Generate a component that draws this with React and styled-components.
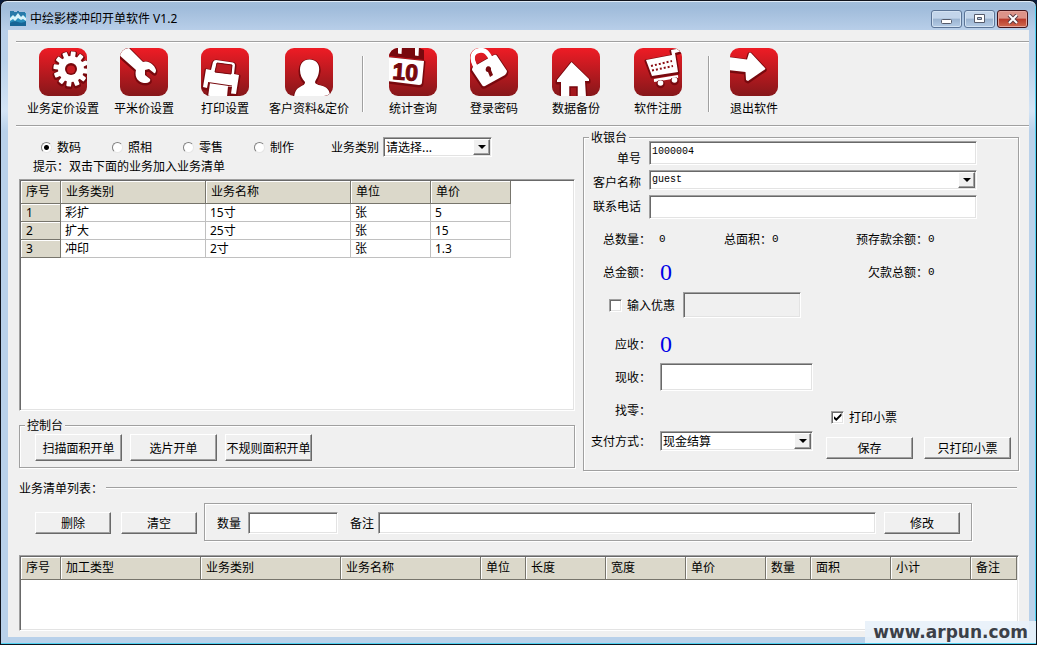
import React from "react";
import styled, { createGlobalStyle, css } from "styled-components";

const uiFont = `"Noto Sans", "Noto Sans CJK SC", sans-serif`;
const monoFont = `"Liberation Mono", "Noto Sans CJK SC", monospace`;

const Global = createGlobalStyle`
  *, *::before, *::after { box-sizing: border-box; }
  body {
    margin: 0;
    background: #0b1c3c;
    font: 12px/16px "Noto Sans CJK SC", sans-serif;
    color: #000;
  }
  button, input, select { font: inherit; color: inherit; margin: 0; }
`;

const sunken = css`
  border: 1px solid;
  border-color: #a0a0a0 #fff #fff #a0a0a0;
  box-shadow: inset 1px 1px #696969, inset -1px -1px #e3e3e3;
`;

const raised = css`
  border: 1px solid;
  border-color: #fff #696969 #696969 #fff;
  box-shadow: inset -1px -1px #a0a0a0;
`;

const Window = styled.div`
  position: relative;
  min-height: 100vh;
  display: flex;
  flex-direction: column;
  padding: 0 7px 7px 7px;
  background: linear-gradient(#a3bedb 0, #9fbbda 6px, #b9cfe9 30px, #b9d1ea 60px, #d4e4f5 110px, #b9d1ea 130px);
  border: 1px solid #10131c;
  border-radius: 7px 7px 0 0;
  box-shadow: inset 0 1px #dfeaf6, inset -1px -1px #4fd2f2;
`;

const TitleBar = styled.header`
  height: 29px;
  flex: none;
  display: flex;
  align-items: center;
  gap: 4px;
  padding: 6px 1px 0 2px;
  font-family: ${uiFont};
`;

const Title = styled.h1`
  flex: 1;
  margin: 0;
  font: inherit;
`;

const WindowControls = styled.div`
  display: flex;
  gap: 2px;
`;

const WindowButton = styled.button`
  width: 31px;
  height: 18px;
  padding: 0;
  display: grid;
  place-items: center;
  border-radius: 3px;
  border: 1px solid ${(p) => (p.$danger ? "#43141a" : "#5b7496")};
  box-shadow: inset 0 0 0 1px ${(p) => (p.$danger ? "#e5a59c" : "#d3e2f2")};
  background: ${(p) =>
    p.$danger
      ? "linear-gradient(#dc9388 0 45%, #b93a2a 50%, #cf6a50)"
      : "linear-gradient(#c3d5ea 0 45%, #9ab3d0 50%, #b4cbe5)"};
`;

const Content = styled.main`
  flex: 1;
  display: flex;
  flex-direction: column;
  padding: 11px 0 6px;
  background: #f0f0f0;
`;

const Toolbar = styled.nav`
  display: flex;
  gap: 1px;
  margin-left: 8px;
  padding: 6px 0 9px 7px;
  border: solid #a0a0a0;
  border-width: 1px 0;
  box-shadow: inset 0 1px #fff, 0 1px #fff;
`;

const ToolButton = styled.button`
  width: ${(p) => p.$w || 80}px;
  flex: none;
  padding: 0;
  border: 0;
  background: none;
  display: flex;
  flex-direction: column;
  align-items: center;
  gap: 4px;
  white-space: nowrap;
`;

const ToolSeparator = styled.span`
  width: 2px;
  margin: 8px 8px 4px 9px;
  border-left: 1px solid #a0a0a0;
  border-right: 1px solid #fff;
`;

const Columns = styled.div`
  display: grid;
  grid-template-columns: 556fr 436fr;
  gap: 8px;
  padding: 3px 10px 0 11px;
`;

const LeftColumn = styled.div`
  min-width: 0;
  display: flex;
  flex-direction: column;
  padding: 8px 0 3px;
`;

const FilterRow = styled.div`
  height: 20px;
  display: flex;
  align-items: center;
  margin-bottom: 1px;
  padding-left: 22px;
  white-space: nowrap;
`;

const RadioLabel = styled.label`
  display: flex;
  align-items: center;
  gap: 5px;
  margin-right: 31px;
`;

const Radio = styled.input`
  appearance: none;
  width: 11px;
  height: 11px;
  border-radius: 50%;
  border: 1px solid;
  border-color: #808080 #e6e6e6 #e6e6e6 #808080;
  background: #fff;
  &:checked {
    background: radial-gradient(circle, #000 0 2px, #fff 3px);
  }
`;

const FilterLabel = styled.label`
  margin: 0 4px 0 6px;
`;

const Hint = styled.p`
  margin: 0 0 5px 14px;
`;

const SelectFrame = styled.span`
  ${sunken}
  display: flex;
  width: ${(p) => (p.$w ? p.$w + "px" : "100%")};
  height: 20px;
  padding: 1px;
  background: #fff;
`;

const SelectBox = styled.select`
  appearance: none;
  flex: 1;
  min-width: 0;
  padding: 0 1px;
  border: 0;
  border-radius: 0;
  background: transparent;
  outline: none;
  ${(p) => p.$mono && css`font: 10px/14px ${monoFont};`}
`;

const SelectArrow = styled.span`
  ${raised}
  width: 17px;
  display: grid;
  place-items: center;
  background: #f0f0f0;
  pointer-events: none;
  &::after {
    content: "";
    border: solid transparent;
    border-width: 4px 4px 0;
    border-top-color: #000;
  }
`;

const TextBox = styled.input`
  ${sunken}
  width: ${(p) => (p.$w ? p.$w + "px" : "100%")};
  ${(p) => p.$grow && "flex: 1; min-width: 0;"}
  height: ${(p) => p.$h || 24}px;
  padding: 0 2px 4px;
  border-radius: 0;
  background: ${(p) => (p.disabled ? "#f0f0f0" : "#fff")};
  font: 10px/14px ${monoFont};
  outline: none;
`;

const Button = styled.button`
  ${raised}
  width: ${(p) => p.$w || 87}px;
  height: ${(p) => p.$h || 22}px;
  flex: none;
  padding: 0;
  border-radius: 0;
  background: #f0f0f0;
  white-space: nowrap;
  line-height: 16px;
`;

const Sheet = styled.div`
  ${sunken}
  flex: 1;
  min-height: ${(p) => p.$min}px;
  padding: 1px;
  background: #fff;
  overflow: hidden;
`;

const Table = styled.table`
  table-layout: fixed;
  width: ${(p) => (p.$fill ? "100%" : "490px")};
  border-collapse: separate;
  border-spacing: 0;
  font-family: ${uiFont};
`;

const HeadCell = styled.th`
  width: ${(p) => (p.$w ? p.$w + "px" : "auto")};
  height: ${(p) => (p.$row ? 18 : 23)}px;
  padding: ${(p) => (p.$row ? "1px 4px 0 5px" : "0 4px 0 5px")};
  text-align: left;
  font-weight: 400;
  white-space: nowrap;
  background: #dbd8ca;
  border: solid #77756c;
  border-width: 0 1px 1px 0;
  box-shadow: inset 1px 1px #fff;
`;

const Cell = styled.td`
  height: 18px;
  padding: 0 4px;
  border: solid #c0c0c0;
  border-width: 0 1px 1px 0;
`;

const Group = styled.fieldset`
  min-width: 0;
  margin: ${(p) => p.$mt || 0}px 0 0;
  padding: ${(p) => p.$pad};
  border: 1px solid #a0a0a0;
  box-shadow: inset 1px 1px #fff, 1px 1px #fff;
`;

const Legend = styled.legend`
  margin-left: 5px;
  padding: 0 2px;
  background: #f0f0f0;
`;

const ButtonRow = styled.div`
  display: flex;
  gap: ${(p) => p.$gap || 8}px;
  padding: ${(p) => p.$pad || 0};
`;

const CustomerFields = styled.div`
  display: flex;
  gap: 8px;
  margin-top: -4px;
  padding: 0 41px 0 9px;
`;

const LabelStack = styled.div`
  display: flex;
  flex-direction: column;
  padding-top: 5px;
  text-align: right;
  line-height: 24px;
  white-space: nowrap;
`;

const ControlStack = styled.div`
  flex: 1;
  min-width: 0;
  display: flex;
  flex-direction: column;
  gap: 5px;
`;

const Stats = styled.div`
  display: grid;
  grid-template-columns: 121px 132px 1fr;
  grid-auto-rows: 33px;
  align-items: center;
  padding: 3px 0 0 19px;
  white-space: nowrap;
`;

const Stat = styled.div`
  display: flex;
  align-items: center;
  grid-column: ${(p) => p.$col};
`;

const StatLabel = styled.span`
  width: ${(p) => p.$w}px;
  text-align: ${(p) => (p.$right ? "right" : "left")};
`;

const Value = styled.output`
  font: 11px/16px ${monoFont};
`;

const Amount = styled.output`
  font: 24px/28px "Liberation Serif", serif;
  color: #0000e6;
`;

const Discount = styled.div`
  display: flex;
  align-items: center;
  gap: 8px;
  padding: 4px 0 12px 25px;
`;

const CheckLabel = styled.label`
  display: flex;
  align-items: center;
  gap: 5px;
`;

const CheckBox = styled.input`
  ${sunken}
  appearance: none;
  width: 13px;
  height: 13px;
  background: #fff;
  display: grid;
  place-items: center;
  &:checked::after {
    content: "";
    width: 8px;
    height: 8px;
    background: #000;
    clip-path: polygon(0 35%, 35% 65%, 100% 0, 100% 35%, 35% 100%, 0 70%);
  }
`;

const Payment = styled.div`
  display: flex;
  align-items: flex-end;
  justify-content: space-between;
`;

const PaymentFields = styled.div`
  display: grid;
  grid-template-columns: 60px 153px;
  grid-template-rows: 28px 28px 28px 24px;
  gap: 5px 9px;
  align-items: center;
  padding: 0 0 6px 7px;
  white-space: nowrap;
`;

const PaymentLabel = styled.label`
  text-align: right;
`;

const PaymentActions = styled.div`
  display: flex;
  flex-direction: column;
  gap: 12px;
  padding-right: 7px;
`;

const PrintOption = styled.div`
  padding-left: 5px;
`;

const SectionTitle = styled.h2`
  display: flex;
  align-items: center;
  gap: 3px;
  margin: 9px 12px 7px 11px;
  font: inherit;
  &::after {
    content: "";
    flex: 1;
    height: 2px;
    border-top: 1px solid #a0a0a0;
    border-bottom: 1px solid #fff;
  }
`;

const EditRow = styled.div`
  display: flex;
  align-items: center;
  gap: 7px;
  padding: 0 57px 14px 27px;
`;

const EditGroup = styled.div`
  flex: 1;
  height: 38px;
  display: flex;
  align-items: center;
  gap: 8px;
  padding: 2px 11px 0 12px;
  border: 1px solid #a0a0a0;
  box-shadow: inset 1px 1px #fff, 1px 1px #fff;
`;

const EditField = styled.label`
  display: flex;
  align-items: center;
  gap: ${(p) => p.$gap}px;
  ${(p) => p.$grow && "flex: 1; margin-left: 4px;"}
`;

const ListArea = styled.section`
  flex: 1;
  display: flex;
  padding: 0 10px 0 11px;
`;

const Watermark = styled.div`
  position: absolute;
  right: 0;
  bottom: 1px;
  padding: 0 8px;
  background: rgba(232, 241, 250, 0.9);
  color: #3b4048;
  font: bold 17px/22px "DejaVu Sans", sans-serif;
`;

const teeth = Array.from({ length: 12 }, (_, i) => i * 30 + 8);

const art = {
  gear: (
    <g>
      <circle cx="32" cy="21" r="13" />
      {teeth.map((a) => (
        <rect key={a} x="29.6" y="3.4" width="4.8" height="7" rx="1" transform={`rotate(${a} 32 21)`} />
      ))}
    </g>
  ),
  wrench: (
    <path d="M-2-2 L7-2 L23 14 C28 12 34 16 36 22 C36 24 35 26 34 25 L29 21 L25 22 L25 27 L30 31 C31 33 29 35 26 35 C19 35 14 30 16 22 L-2 6 Z" />
  ),
  printer: (
    <path
      fillRule="evenodd"
      d="M15 12 L32 14.500 Q34 15 34 17 L33 26 L38 27 L35 46 L30 45.500 L31 39 L27 38.500 L26 49 L7 49 L9 35 L7 35 L6 40 L2 39 L5 21 L10 22 L12 14 Q13 12 15 12 Z M16 15 L14 24 L30 26 L31 17 Z"
    />
  ),
  person: (
    <path d="M24.500 11.500 C31 11.500 35 16 34 23 C33.500 29 31 31 30 34 C30 37 36 37 40 39 C44 41 45 45 45 49 L9 49 C10 44 11 41 15 39 C18 37 20 37 20 34 C17 31 15 27 15 22 C15 16 18 11.500 24.500 11.500 Z" />
  ),
  calendar: (
    <g>
      <path d="M-2 9 L35 13 L33 34 Q33 37 30 37 L-2 33 Z" />
      <path d="M9-2 L13-2 L12.500 6 L9 5.500 Z M26-2 L30-2 L29.500 8 L26 7.500 Z" />
    </g>
  ),
  lock: (
    <g>
      <path d="M3 19 L24 7 Q26 6 27 8 L37 23 Q37 25 35 27 L15 38 Q13 39 12 37 L2 22 Q2 20 3 19 Z" />
      <path d="M6 19 C0 9 3 3 9 2 C15 1 18 4 21 11" fill="none" stroke="#fff" strokeWidth="4" />
    </g>
  ),
  house: <path d="M19.500 14 L37 31 L37 33 L33 33 L34 49 L9 49 L9 34 L5 34 L5 32 Z" />,
  cart: (
    <g>
      <path d="M12 12 L38 7 L37 2 L48 0 L48 3 L41 5 L44 24 L18 28 Z" />
      <path d="M20 32 L44 28" stroke="#fff" strokeWidth="2" />
      <circle cx="26.500" cy="35" r="2.800" />
      <circle cx="40.500" cy="32" r="2.800" />
    </g>
  ),
  arrow: <path d="M-2 9 L17 11.500 L19 5 Q20 4 21 5 L35 20 Q36 21 34 22 L18 33 L16 32 L15.500 24 L-2 22 Z" />,
};

const detail = {
  gear: (
    <>
      <circle cx="32" cy="21" r="6" fill="#78090e" />
      <circle cx="32" cy="21.500" r="4" fill="#c51d23" />
    </>
  ),
  printer: (
    <>
      <path d="M16 15 L14 24 L30 26 L31 17 Z" fill="#b91c22" stroke="#78090e" />
      <path d="M7 34.500 L31 38" stroke="#78090e" strokeWidth="1" fill="none" />
    </>
  ),
  calendar: (
    <>
      <path d="M0 0 L9 0 L9 6 L13 6.500 L13 0 L26 0 L26 8 L30 8.500 L30 0 L35 2 L35 12 L0 8 Z" fill="#78090e" />
      <text
        x="3"
        y="31"
        transform="rotate(4 3 31)"
        fill="#78090e"
        stroke="#78090e"
        strokeWidth="1"
        fontFamily="Liberation Sans, sans-serif"
        fontWeight="700"
        fontSize="23"
      >
        10
      </text>
    </>
  ),
  lock: (
    <path d="M16 20 C17 17 22 18 21 22 L23 27 L20 29 L18 24 C16 24 15 22 16 20 Z" fill="#78090e" />
  ),
  house: <path d="M18 49 L18 39 L25 39 L25 49 Z" fill="#a4171d" stroke="#78090e" strokeWidth="1.500" />,
  cart: (
    <g stroke="#8c1015" strokeWidth="2" strokeDasharray="2 2" fill="none">
      <path d="M17 18 L38 13" />
      <path d="M18 22.500 L39 18" />
    </g>
  ),
};

function ToolIcon({ name }) {
  return (
    <svg width="48" height="48" viewBox="0 0 48 48" aria-hidden="true">
      <defs>
        <linearGradient id={`bg-${name}`} x1="0" y1="0" x2="0" y2="1">
          <stop offset="0" stopColor="#ee1c25" />
          <stop offset="1" stopColor="#86171a" />
        </linearGradient>
        <clipPath id={`clip-${name}`}>
          <rect width="48" height="48" rx="9" />
        </clipPath>
      </defs>
      <g clipPath={`url(#clip-${name})`}>
        <rect width="48" height="48" fill={`url(#bg-${name})`} />
        <g fill="#78090e" stroke="#78090e" strokeWidth="3" strokeLinejoin="round" transform="translate(0 1)">
          {art[name]}
        </g>
        <g fill="#fff">{art[name]}</g>
        {detail[name]}
      </g>
    </svg>
  );
}

function AppIcon() {
  return (
    <svg width="16" height="16" viewBox="0 0 16 16" aria-hidden="true">
      <rect y="2" width="16" height="13" fill="#2a8fbd" />
      <path d="M0 0h4v1h3V0h2v1h6v4H0z" fill="#2879a8" />
      <path d="M0 7l3-3 2 2 3-4 3 4 2-2 3 3v3l-3-2-2 1-3-2-3 3-2-2-3 2z" fill="#d9f3fa" />
      <path d="M0 12q4-3 8-1t8-1v5H0z" fill="#176596" />
    </svg>
  );
}

const toolGroups = [
  [
    ["gear", "业务定价设置"],
    ["wrench", "平米价设置"],
    ["printer", "打印设置"],
    ["person", "客户资料&定价", 86],
  ],
  [
    ["calendar", "统计查询"],
    ["lock", "登录密码"],
    ["house", "数据备份", 82],
    ["cart", "软件注册", 80],
  ],
  [["arrow", "退出软件", 70]],
];

const services = [
  ["彩扩", "15寸", "张", "5"],
  ["扩大", "25寸", "张", "15"],
  ["冲印", "2寸", "张", "1.3"],
];

const serviceColumns = [
  ["序号", 40],
  ["业务类别", 145],
  ["业务名称", 145],
  ["单位", 80],
  ["单价", 80],
];

const orderColumns = [
  ["序号", 40],
  ["加工类型", 140],
  ["业务类别", 140],
  ["业务名称", 140],
  ["单位", 45],
  ["长度", 80],
  ["宽度", 80],
  ["单价", 80],
  ["数量", 45],
  ["面积", 80],
  ["小计", 80],
  ["备注", 0],
];

function Select({ id, value, width, mono }) {
  return (
    <SelectFrame $w={width}>
      <SelectBox id={id} $mono={mono}>
        <option>{value}</option>
      </SelectBox>
      <SelectArrow />
    </SelectFrame>
  );
}

function HeaderRow({ columns }) {
  return (
    <thead>
      <tr>
        {columns.map(([name, w]) => (
          <HeadCell key={name} scope="col" $w={w}>
            {name}
          </HeadCell>
        ))}
      </tr>
    </thead>
  );
}

function Checkout() {
  return (
    <Group $pad="0 0 11px">
      <Legend>收银台</Legend>
      <CustomerFields>
        <LabelStack>
          <label htmlFor="order-no">单号</label>
          <label htmlFor="customer">客户名称</label>
          <label htmlFor="phone">联系电话</label>
        </LabelStack>
        <ControlStack>
          <TextBox id="order-no" defaultValue="1000004" />
          <Select id="customer" value="guest" mono />
          <TextBox id="phone" />
        </ControlStack>
      </CustomerFields>
      <Stats>
        <Stat $col="1">
          <StatLabel $w="56">总数量：</StatLabel>
          <Value>0</Value>
        </Stat>
        <Stat $col="2">
          <StatLabel $w="48">总面积：</StatLabel>
          <Value>0</Value>
        </Stat>
        <Stat $col="3">
          <StatLabel $w="72" $right>预存款余额：</StatLabel>
          <Value>0</Value>
        </Stat>
        <Stat $col="1">
          <StatLabel $w="57">总金额：</StatLabel>
          <Amount>0</Amount>
        </Stat>
        <Stat $col="3">
          <StatLabel $w="72" $right>欠款总额：</StatLabel>
          <Value>0</Value>
        </Stat>
      </Stats>
      <Discount>
        <CheckLabel>
          <CheckBox type="checkbox" />
          输入优惠
        </CheckLabel>
        <TextBox aria-label="优惠" $w={118} $h={26} disabled />
      </Discount>
      <Payment>
        <PaymentFields>
          <PaymentLabel htmlFor="due">应收：</PaymentLabel>
          <Amount id="due">0</Amount>
          <PaymentLabel htmlFor="received">现收：</PaymentLabel>
          <TextBox id="received" $h={28} />
          <PaymentLabel htmlFor="change">找零：</PaymentLabel>
          <output id="change" />
          <PaymentLabel htmlFor="method">支付方式：</PaymentLabel>
          <Select id="method" value="现金结算" />
        </PaymentFields>
        <PaymentActions>
          <PrintOption>
            <CheckLabel>
              <CheckBox type="checkbox" defaultChecked />
              打印小票
            </CheckLabel>
          </PrintOption>
          <ButtonRow $gap={11}>
            <Button>保存</Button>
            <Button>只打印小票</Button>
          </ButtonRow>
        </PaymentActions>
      </Payment>
    </Group>
  );
}

export default function App() {
  return (
    <>
      <Global />
      <Window>
        <TitleBar>
          <AppIcon />
          <Title>中绘影楼冲印开单软件 V1.2</Title>
          <WindowControls>
            <WindowButton aria-label="最小化">
              <svg width="11" height="12">
                <rect x="0.5" y="6.500" width="10" height="4" rx="1" fill="#fff" stroke="#555b6b" />
              </svg>
            </WindowButton>
            <WindowButton aria-label="最大化">
              <svg width="11" height="10">
                <path d="M.5.5h10v8H.5z M3.500 3.500v2h4v-2z" fill="#fff" fillRule="evenodd" stroke="#555b6b" />
              </svg>
            </WindowButton>
            <WindowButton aria-label="关闭" $danger>
              <svg width="12" height="10">
                <path d="M2 1l8 8M10 1l-8 8" stroke="#5a3a42" strokeWidth="4" />
                <path d="M2 1l8 8M10 1l-8 8" stroke="#fff" strokeWidth="2" />
              </svg>
            </WindowButton>
          </WindowControls>
        </TitleBar>
        <Content>
          <Toolbar>
            {toolGroups.map((group, i) => (
              <React.Fragment key={i}>
                {i > 0 && <ToolSeparator />}
                {group.map(([icon, text, w]) => (
                  <ToolButton key={icon} $w={w}>
                    <ToolIcon name={icon} />
                    {text}
                  </ToolButton>
                ))}
              </React.Fragment>
            ))}
          </Toolbar>
          <Columns>
            <LeftColumn>
              <FilterRow>
                {["数码", "照相", "零售", "制作"].map((name, i) => (
                  <RadioLabel key={name}>
                    <Radio type="radio" name="kind" defaultChecked={i === 0} />
                    {name}
                  </RadioLabel>
                ))}
                <FilterLabel htmlFor="category">业务类别</FilterLabel>
                <Select id="category" value="请选择..." width={109} />
              </FilterRow>
              <Hint>提示：双击下面的业务加入业务清单</Hint>
              <Sheet $min={231}>
                <Table>
                  <HeaderRow columns={serviceColumns} />
                  <tbody>
                    {services.map((row, i) => (
                      <tr key={i}>
                        <HeadCell scope="row" $row>
                          {i + 1}
                        </HeadCell>
                        {row.map((v, j) => (
                          <Cell key={j}>{v}</Cell>
                        ))}
                      </tr>
                    ))}
                  </tbody>
                </Table>
              </Sheet>
              <Group $mt={6} $pad="1px 0 6px">
                <Legend>控制台</Legend>
                <ButtonRow $gap={8} $pad="0 0 0 15px">
                  <Button $h={27}>扫描面积开单</Button>
                  <Button $h={27}>选片开单</Button>
                  <Button $h={27}>不规则面积开单</Button>
                </ButtonRow>
              </Group>
            </LeftColumn>
            <Checkout />
          </Columns>
          <SectionTitle>业务清单列表：</SectionTitle>
          <EditRow>
            <ButtonRow $gap={10} $pad="2px 0 0">
              <Button $w={76}>删除</Button>
              <Button $w={76}>清空</Button>
            </ButtonRow>
            <EditGroup>
              <EditField $gap={7}>
                数量
                <TextBox $w={90} $h={22} />
              </EditField>
              <EditField $gap={4} $grow>
                备注
                <TextBox $grow $h={22} />
              </EditField>
              <Button $w={76}>修改</Button>
            </EditGroup>
          </EditRow>
          <ListArea>
            <Sheet $min={60}>
              <Table $fill>
                <HeaderRow columns={orderColumns} />
              </Table>
            </Sheet>
          </ListArea>
        </Content>
        <Watermark>www.arpun.com</Watermark>
      </Window>
    </>
  );
}
